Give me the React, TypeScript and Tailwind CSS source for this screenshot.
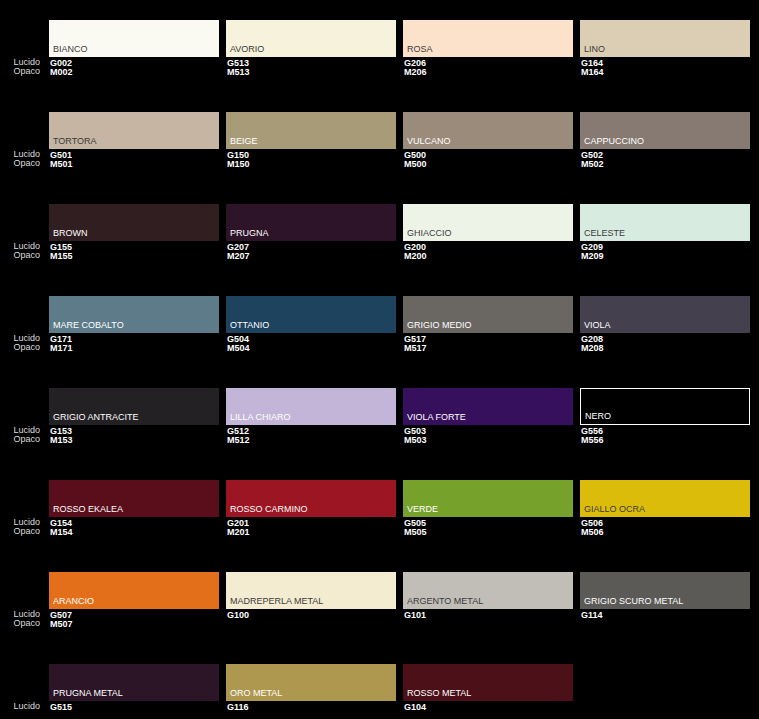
const rows: { name: string; color: string; g: string; m?: string; dark?: boolean; border?: boolean }[][] = [
  [
    { name: "BIANCO", color: "#fbfaf2", g: "G002", m: "M002", dark: true },
    { name: "AVORIO", color: "#f7f2dc", g: "G513", m: "M513", dark: true },
    { name: "ROSA", color: "#fde2cb", g: "G206", m: "M206", dark: true },
    { name: "LINO", color: "#dcceb4", g: "G164", m: "M164", dark: true },
  ],
  [
    { name: "TORTORA", color: "#c5b5a2", g: "G501", m: "M501", dark: true },
    { name: "BEIGE", color: "#a89c78", g: "G150", m: "M150" },
    { name: "VULCANO", color: "#9a8b7a", g: "G500", m: "M500" },
    { name: "CAPPUCCINO", color: "#867a72", g: "G502", m: "M502" },
  ],
  [
    { name: "BROWN", color: "#311e20", g: "G155", m: "M155" },
    { name: "PRUGNA", color: "#2e1429", g: "G207", m: "M207" },
    { name: "GHIACCIO", color: "#eef3e8", g: "G200", m: "M200", dark: true },
    { name: "CELESTE", color: "#d8ebe0", g: "G209", m: "M209", dark: true },
  ],
  [
    { name: "MARE COBALTO", color: "#5d7b88", g: "G171", m: "M171" },
    { name: "OTTANIO", color: "#1d435f", g: "G504", m: "M504" },
    { name: "GRIGIO MEDIO", color: "#6a6763", g: "G517", m: "M517" },
    { name: "VIOLA", color: "#44404e", g: "G208", m: "M208" },
  ],
  [
    { name: "GRIGIO ANTRACITE", color: "#242124", g: "G153", m: "M153" },
    { name: "LILLA CHIARO", color: "#c2b5d7", g: "G512", m: "M512" },
    { name: "VIOLA FORTE", color: "#36105c", g: "G503", m: "M503" },
    { name: "NERO", color: "#000000", g: "G556", m: "M556", border: true },
  ],
  [
    { name: "ROSSO EKALEA", color: "#5a0e1c", g: "G154", m: "M154" },
    { name: "ROSSO CARMINO", color: "#9b1523", g: "G201", m: "M201" },
    { name: "VERDE", color: "#76a22c", g: "G505", m: "M505" },
    { name: "GIALLO OCRA", color: "#dcbc0a", g: "G506", m: "M506", dark: true },
  ],
  [
    { name: "ARANCIO", color: "#e46f1b", g: "G507", m: "M507" },
    { name: "MADREPERLA METAL", color: "#f4ecd0", g: "G100", dark: true },
    { name: "ARGENTO METAL", color: "#c1beb8", g: "G101", dark: true },
    { name: "GRIGIO SCURO METAL", color: "#5b5a57", g: "G114" },
  ],
  [
    { name: "PRUGNA METAL", color: "#2b1526", g: "G515" },
    { name: "ORO METAL", color: "#ae9850", g: "G116" },
    { name: "ROSSO METAL", color: "#4c1018", g: "G104" },
  ],
];

export default function App() {
  return (
    <div
      className="w-[759px] h-[719px] overflow-hidden bg-black pt-[20px] text-[9px] leading-[9px]"
      style={{ fontFamily: '"Liberation Sans", Arial, sans-serif' }}
    >
      <div className="flex flex-col gap-[35px]">
        {rows.map((row, i) => {
          const hasM = row.some((s) => s.m);
          return (
            <div key={i} className="flex h-[57px]">
              <div className="w-[49px] flex flex-col items-end pr-[9px] pt-[38px] text-[#ddd] text-[9px] leading-[9px]">
                <span>Lucido</span>
                {hasM && <span>Opaco</span>}
              </div>
              <div className="flex gap-[7px]">
                {row.map((s) => (
                  <div key={s.name} className="w-[170px]">
                    <div
                      className={`h-[37px] flex items-end pl-[4px] pb-[3px] ${s.dark ? "text-[#3a3a3a]" : "text-white"} ${s.border ? "border border-white" : ""}`}
                      style={{ backgroundColor: s.color }}
                    >
                      {s.name}
                    </div>
                    <div className="pl-[1px] pt-[2px] font-bold text-white">
                      <div>{s.g}</div>
                      {s.m && <div>{s.m}</div>}
                    </div>
                  </div>
                ))}
              </div>
            </div>
          );
        })}
      </div>
    </div>
  );
}
